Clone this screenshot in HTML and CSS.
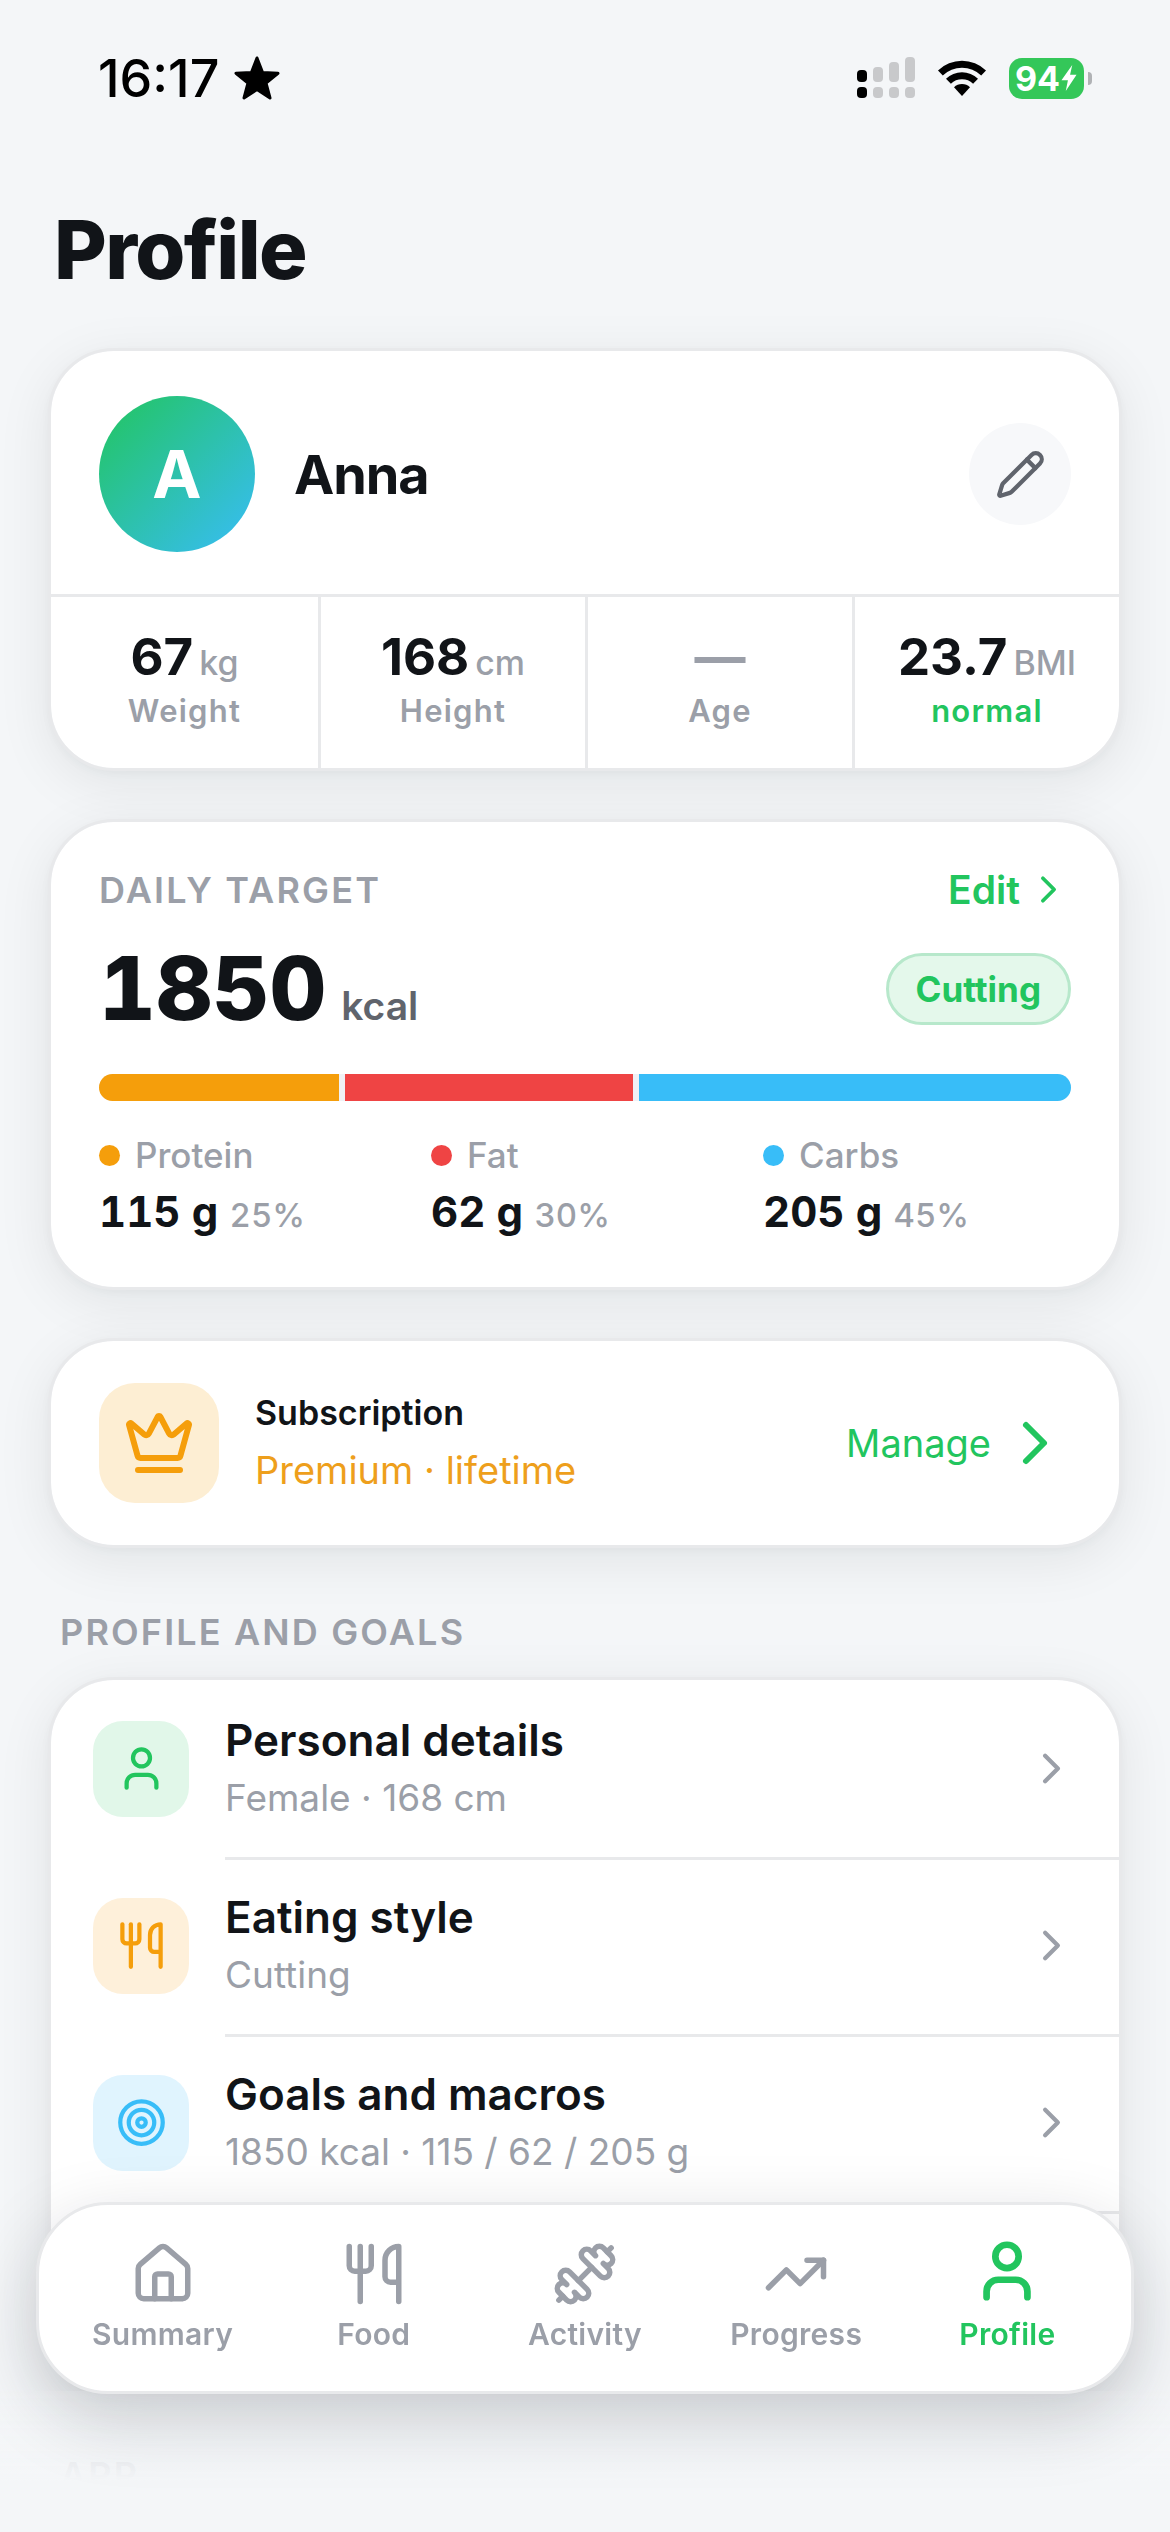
FILE: index.html
```html
<!DOCTYPE html>
<html lang="en">
<head>
  <meta charset="UTF-8">
  <meta name="viewport" content="width=device-width, initial-scale=1.0">
  <title>Profile</title>
  <link rel="stylesheet" href="styles.css">
</head>
<body>

<!-- shared icons -->
<svg class="sprite" aria-hidden="true">
  <symbol id="chevron" viewBox="0 0 24 24"><path d="m9 18 6-6-6-6"/></symbol>
  <symbol id="user" viewBox="0 0 24 24"><path d="M19 21v-2a4 4 0 0 0-4-4H9a4 4 0 0 0-4 4v2"/><circle cx="12" cy="7" r="4"/></symbol>
  <symbol id="utensils" viewBox="0 0 24 24"><path d="M3 2v7c0 1.1.9 2 2 2h4a2 2 0 0 0 2-2V2"/><path d="M7 2v20"/><path d="M21 15V2a5 5 0 0 0-5 5v6c0 1.1.9 2 2 2h3Zm0 0v7"/></symbol>
</svg>

<div class="status-bar">
  <div class="status-left">
    <span class="time">16:17</span>
    <svg class="star" viewBox="0 0 46 44"><path d="M23 2l5.600 14.500 15.400.8-12 9.700 4 15L23 33.500 10 42l4-15L2 17.300l15.400-.8z"/></svg>
  </div>
  <div class="status-right">
    <svg class="signal" viewBox="0 0 58 42">
      <g fill="#000"><rect x="0" y="13" width="10" height="12" rx="4"/><rect x="0" y="30" width="10" height="11" rx="4"/></g>
      <g fill="#c8c9cb"><rect x="16" y="10" width="10" height="15" rx="4"/><rect x="32" y="5" width="10" height="20" rx="4"/><rect x="48" y="0" width="10" height="25" rx="4"/><rect x="16" y="30" width="10" height="11" rx="4"/><rect x="32" y="30" width="10" height="11" rx="4"/><rect x="48" y="30" width="10" height="11" rx="4"/></g>
    </svg>
    <svg class="wifi" viewBox="0 0 50 38">
      <path d="M1 11.500a34.500 34.500 0 0 1 48 0l-4.800 5a27.700 27.700 0 0 0-38.400 0z"/>
      <path d="M9 19.800a23 23 0 0 1 32 0l-4.900 5a16 16 0 0 0-22.200 0z"/>
      <path d="M17 28.200a11.500 11.500 0 0 1 16 0L25 37z"/>
    </svg>
    <div class="battery">
      <span>94</span>
      <svg class="bolt" viewBox="0 0 16 26"><path d="M11 1 1 15h6l-2 10L15 10H9z"/></svg>
    </div>
  </div>
</div>

<main class="page">
  <h1>Profile</h1>

  <section class="card">
    <div class="user-head">
      <div class="avatar">A</div>
      <h2 class="user-name">Anna</h2>
      <button class="edit-btn" aria-label="Edit profile">
        <svg class="icon icon-sm" viewBox="0 0 24 24"><path d="M21.174 6.812a1 1 0 0 0-3.986-3.987L3.842 16.174a2 2 0 0 0-.5.83l-1.321 4.352a.5.5 0 0 0 .623.622l4.353-1.320a2 2 0 0 0 .83-.497z"/><path d="m15 5 4 4"/></svg>
      </button>
    </div>
    <div class="stats">
      <div class="stat">
        <div class="stat-value">67<small>kg</small></div>
        <div class="stat-label">Weight</div>
      </div>
      <div class="stat">
        <div class="stat-value">168<small>cm</small></div>
        <div class="stat-label">Height</div>
      </div>
      <div class="stat">
        <div class="stat-value empty">—</div>
        <div class="stat-label">Age</div>
      </div>
      <div class="stat">
        <div class="stat-value">23.7<small>BMI</small></div>
        <div class="stat-label good">normal</div>
      </div>
    </div>
  </section>

  <section class="card target">
    <div class="target-head">
      <h2 class="caption">DAILY TARGET</h2>
      <button class="link-btn">Edit <svg class="icon icon-xs" viewBox="0 0 24 24"><use href="#chevron"/></svg></button>
    </div>
    <div class="target-main">
      <div class="kcal">1850<small>kcal</small></div>
      <span class="pill">Cutting</span>
    </div>
    <div class="macro-bar">
      <span class="protein" style="flex-grow: 25"></span>
      <span class="fat" style="flex-grow: 30"></span>
      <span class="carbs" style="flex-grow: 45"></span>
    </div>
    <div class="macros">
      <div>
        <div class="macro-name"><i class="dot protein"></i>Protein</div>
        <div class="macro-value">115 g <small>25%</small></div>
      </div>
      <div>
        <div class="macro-name"><i class="dot fat"></i>Fat</div>
        <div class="macro-value">62 g <small>30%</small></div>
      </div>
      <div>
        <div class="macro-name"><i class="dot carbs"></i>Carbs</div>
        <div class="macro-value">205 g <small>45%</small></div>
      </div>
    </div>
  </section>

  <section class="card subscription">
    <div class="sub-icon">
      <svg class="icon icon-lg" viewBox="0 0 24 24"><path d="M11.562 3.266a.5.5 0 0 1 .876 0L15.390 8.870a1 1 0 0 0 1.516.294L21.183 5.500a.5.5 0 0 1 .798.519l-2.834 10.246a1 1 0 0 1-.956.734H5.810a1 1 0 0 1-.957-.734L2.020 6.020a.5.5 0 0 1 .798-.519l4.276 3.664a1 1 0 0 0 1.516-.294z"/><path d="M5 21h14"/></svg>
    </div>
    <div class="sub-text">
      <div class="sub-title">Subscription</div>
      <div class="sub-plan">Premium · lifetime</div>
    </div>
    <button class="manage-btn">Manage <svg class="icon icon-lg" viewBox="0 0 24 24"><use href="#chevron"/></svg></button>
  </section>

  <h2 class="caption section-title">PROFILE AND GOALS</h2>

  <section class="card list">
    <a class="row" href="#">
      <span class="row-icon green"><svg class="icon icon-sm" viewBox="0 0 24 24"><use href="#user"/></svg></span>
      <span class="row-main">
        <span class="row-text"><span class="row-title">Personal details</span><span class="row-sub">Female · 168 cm</span></span>
        <svg class="icon icon-sm" viewBox="0 0 24 24"><use href="#chevron"/></svg>
      </span>
    </a>
    <a class="row" href="#">
      <span class="row-icon orange"><svg class="icon icon-sm" viewBox="0 0 24 24"><use href="#utensils"/></svg></span>
      <span class="row-main">
        <span class="row-text"><span class="row-title">Eating style</span><span class="row-sub">Cutting</span></span>
        <svg class="icon icon-sm" viewBox="0 0 24 24"><use href="#chevron"/></svg>
      </span>
    </a>
    <a class="row" href="#">
      <span class="row-icon blue"><svg class="icon icon-sm" viewBox="0 0 24 24"><circle cx="12" cy="12" r="10"/><circle cx="12" cy="12" r="6"/><circle cx="12" cy="12" r="2"/></svg></span>
      <span class="row-main">
        <span class="row-text"><span class="row-title">Goals and macros</span><span class="row-sub">1850 kcal · 115 / 62 / 205 g</span></span>
        <svg class="icon icon-sm" viewBox="0 0 24 24"><use href="#chevron"/></svg>
      </span>
    </a>
    <div class="row">
      <span class="row-icon"></span>
      <span class="row-main"></span>
    </div>
  </section>

  <h2 class="caption section-title">APP</h2>
</main>

<div class="bottom-fade"></div>

<nav class="tab-bar">
  <a class="tab" href="#">
    <svg class="icon" viewBox="0 0 24 24"><path d="M15 21v-8a1 1 0 0 0-1-1h-4a1 1 0 0 0-1 1v8"/><path d="M3 10a2 2 0 0 1 .709-1.528l7-5.999a2 2 0 0 1 2.582 0l7 5.999A2 2 0 0 1 21 10v9a2 2 0 0 1-2 2H5a2 2 0 0 1-2-2z"/></svg>
    <span>Summary</span>
  </a>
  <a class="tab" href="#">
    <svg class="icon" viewBox="0 0 24 24"><use href="#utensils"/></svg>
    <span>Food</span>
  </a>
  <a class="tab" href="#">
    <svg class="icon" viewBox="0 0 24 24"><path d="M17.596 12.768a2 2 0 1 0 2.829-2.829l-1.768-1.767a2 2 0 0 0 2.828-2.829l-2.828-2.828a2 2 0 0 0-2.829 2.828l-1.767-1.768a2 2 0 1 0-2.829 2.829z"/><path d="m2.500 21.500 1.400-1.400"/><path d="m20.100 3.900 1.400-1.400"/><path d="M5.343 21.485a2 2 0 1 0 2.829-2.828l1.767 1.768a2 2 0 1 0 2.829-2.829l-6.364-6.364a2 2 0 1 0-2.829 2.829l1.768 1.767a2 2 0 0 0-2.828 2.829z"/><path d="m9.600 14.400 4.800-4.800"/></svg>
    <span>Activity</span>
  </a>
  <a class="tab" href="#">
    <svg class="icon" viewBox="0 0 24 24"><path d="M16 7h6v6"/><path d="m22 7-8.500 8.500-5-5L2 17"/></svg>
    <span>Progress</span>
  </a>
  <a class="tab active" href="#">
    <svg class="icon" viewBox="0 0 24 24"><use href="#user"/></svg>
    <span>Profile</span>
  </a>
</nav>

</body>
</html>
```
FILE: styles.css
```css
:root {
  --bg: #f4f6f8;
  --line: #e8e9eb;
  --ink: #111418;
  --gray: #9b9fa8;
  --green: #22c55e;
  --orange: #f59e0b;
  --red: #ef4444;
  --blue: #38bdf8;
}
* {
  box-sizing: border-box;
}
body {
  margin: 0;
  background: var(--bg);
  color: var(--ink);
  font-family: Inter, "Liberation Sans", sans-serif;
}
h1, h2 {
  margin: 0;
}
button {
  border: 0;
  padding: 0;
  background: none;
  font-family: inherit;
  cursor: pointer;
}
a {
  color: inherit;
  text-decoration: none;
}
.sprite {
  display: none;
}
.icon {
  flex: none;
  width: 66px;
  height: 66px;
  fill: none;
  stroke: currentColor;
  stroke-width: 2;
  stroke-linecap: round;
  stroke-linejoin: round;
}
.icon-xs {
  width: 45px;
  height: 45px;
}
.icon-sm {
  width: 51px;
  height: 51px;
}
.icon-lg {
  width: 72px;
  height: 72px;
}

/* status bar */
.status-bar {
  display: flex;
  justify-content: space-between;
  padding: 48px 78px 0 98px;
  color: #000;
}
.status-left,
.status-right {
  display: flex;
  align-items: center;
  height: 60px;
}
.status-left {
  gap: 15px;
}
.time {
  font-size: 52px;
  font-weight: 500;
}
.star {
  width: 46px;
  height: 44px;
  stroke: #000;
  stroke-width: 3;
  stroke-linejoin: round;
}
.status-right {
  gap: 22px;
}
.signal {
  width: 58px;
  height: 42px;
}
.wifi {
  width: 50px;
  height: 38px;
}
.battery {
  position: relative;
  display: flex;
  align-items: center;
  justify-content: center;
  width: 75px;
  height: 41px;
  margin-right: 8px;
  border-radius: 13px;
  background: #34c759;
  color: #fff;
  font-size: 34px;
  font-weight: 700;
}
.battery::after {
  content: "";
  position: absolute;
  right: -8px;
  top: 14px;
  width: 4px;
  height: 13px;
  border-radius: 0 4px 4px 0;
  background: #b0b2b5;
}
.bolt {
  width: 18px;
  height: 28px;
  fill: #fff;
}

/* page */
.page {
  padding: 94px 48px 0;
}
h1 {
  margin-bottom: 50px;
  padding-left: 6px;
  font-size: 81px;
  font-weight: 800;
  line-height: 96px;
  letter-spacing: -0.02em;
}
.card {
  margin-bottom: 48px;
  border: 3px solid var(--line);
  border-radius: 66px;
  background: #fff;
  background-clip: padding-box;
  box-shadow: 0 12px 54px rgba(17, 20, 24, 0.08), 0 3px 9px rgba(17, 20, 24, 0.03);
  overflow: hidden;
}
.caption {
  color: var(--gray);
  font-size: 36px;
  font-weight: 600;
  letter-spacing: 0.06em;
}

/* user card */
.user-head {
  display: flex;
  align-items: center;
  gap: 39px;
  padding: 45px 48px 42px;
}
.avatar {
  display: flex;
  align-items: center;
  justify-content: center;
  width: 156px;
  height: 156px;
  border-radius: 50%;
  background: linear-gradient(135deg, var(--green), var(--blue));
  color: #fff;
  font-size: 66px;
  font-weight: 700;
}
.user-name {
  flex: 1;
  font-size: 54px;
  font-weight: 700;
  letter-spacing: -0.02em;
}
.edit-btn {
  display: flex;
  align-items: center;
  justify-content: center;
  width: 102px;
  height: 102px;
  border-radius: 50%;
  background: #f7f8fa;
  color: #60646c;
}
.stats {
  display: grid;
  grid-template-columns: repeat(4, 1fr);
  border-top: 3px solid var(--line);
}
.stat {
  padding: 30px 0 39px;
  text-align: center;
}
.stat + .stat {
  border-left: 3px solid var(--line);
}
.stat-value {
  font-size: 51px;
  font-weight: 700;
  line-height: 60px;
}
.stat-value small {
  margin-left: 6px;
  color: var(--gray);
  font-size: 34px;
  font-weight: 500;
  line-height: 1;
}
.stat-value.empty {
  color: var(--gray);
}
.stat-label {
  margin-top: 6px;
  color: var(--gray);
  font-size: 31px;
  font-weight: 600;
  line-height: 36px;
  letter-spacing: 0.04em;
}
.stat-label.good {
  color: var(--green);
}

/* daily target */
.target {
  padding: 45px 48px 48px;
}
.target-head,
.target-main {
  display: flex;
  align-items: center;
  justify-content: space-between;
}
.target-head {
  height: 45px;
}
.link-btn {
  display: flex;
  align-items: center;
  gap: 6px;
  color: var(--green);
  font-size: 39px;
  font-weight: 600;
}
.target-main {
  margin-top: 24px;
}
.kcal {
  font-size: 88px;
  font-weight: 800;
  line-height: 105px;
  font-variant-numeric: tabular-nums;
}
.kcal small {
  margin-left: 15px;
  color: #60646c;
  font-size: 39px;
  font-weight: 600;
  line-height: 1;
}
.pill {
  padding: 0 27px;
  border: 3px solid #b7e8cb;
  border-radius: 36px;
  background: #e4f8eb;
  color: var(--green);
  font-size: 35px;
  font-weight: 700;
  line-height: 66px;
}
.protein {
  background: var(--orange);
}
.fat {
  background: var(--red);
}
.carbs {
  background: var(--blue);
}
.macro-bar {
  display: flex;
  gap: 6px;
  height: 27px;
  margin-top: 33px;
  border-radius: 14px;
  background: #f0f1f5;
  overflow: hidden;
}
.macro-bar span {
  flex-basis: 0;
}
.macros {
  display: grid;
  grid-template-columns: repeat(3, 1fr);
  gap: 24px;
  margin-top: 33px;
}
.macro-name {
  display: flex;
  align-items: center;
  gap: 15px;
  color: var(--gray);
  font-size: 35px;
  font-weight: 500;
  line-height: 42px;
}
.dot {
  width: 21px;
  height: 21px;
  border-radius: 50%;
}
.macro-value {
  margin-top: 9px;
  font-size: 42px;
  font-weight: 700;
  line-height: 54px;
  font-variant-numeric: tabular-nums;
}
.macro-value small {
  color: var(--gray);
  font-size: 33px;
  font-weight: 500;
  line-height: 1;
}

/* subscription */
.subscription {
  display: flex;
  align-items: center;
  gap: 36px;
  padding: 42px 48px;
}
.sub-icon {
  display: flex;
  align-items: center;
  justify-content: center;
  width: 120px;
  height: 120px;
  border-radius: 36px;
  background: #fdeed3;
  color: var(--orange);
}
.sub-text {
  flex: 1;
}
.sub-title {
  font-size: 34px;
  font-weight: 600;
  line-height: 54px;
}
.sub-plan {
  color: #ee9f1c;
  font-size: 38px;
  line-height: 60px;
}
.manage-btn {
  display: flex;
  align-items: center;
  gap: 8px;
  color: var(--green);
  font-size: 38px;
}

/* settings list */
.section-title {
  margin: 60px 0 21px;
  padding-left: 12px;
  line-height: 48px;
}
.list {
  margin-bottom: 0;
}
.row {
  display: flex;
  align-items: center;
  gap: 36px;
  height: 177px;
  padding-left: 42px;
}
.row-icon {
  display: flex;
  align-items: center;
  justify-content: center;
  width: 96px;
  height: 96px;
  border-radius: 30px;
}
.row-icon.green {
  background: #e1f7e9;
  color: var(--green);
}
.row-icon.orange {
  background: #fef0da;
  color: var(--orange);
}
.row-icon.blue {
  background: #e0f4fe;
  color: var(--blue);
}
.row-main {
  flex: 1;
  display: flex;
  align-items: center;
  justify-content: space-between;
  height: 100%;
  padding: 0 42px 3px 0;
  border-top: 3px solid var(--line);
  color: var(--gray);
}
.row:first-child .row-main {
  border-top-color: transparent;
}
.row-title,
.row-sub {
  display: block;
}
.row-title {
  color: var(--ink);
  font-size: 44px;
  font-weight: 600;
  line-height: 57px;
}
.row-sub {
  font-size: 37px;
  line-height: 57px;
}

/* bottom navigation */
.bottom-fade {
  position: fixed;
  left: 0;
  right: 0;
  bottom: 0;
  height: 141px;
  background: linear-gradient(rgba(244, 246, 248, 0.6), var(--bg) 90px);
}
.tab-bar {
  position: fixed;
  left: 36px;
  right: 36px;
  bottom: 138px;
  display: grid;
  grid-template-columns: repeat(5, 1fr);
  padding: 36px 18px 39px;
  border: 3px solid var(--line);
  border-radius: 72px;
  background: #fff;
  box-shadow: 0 24px 72px rgba(17, 24, 32, 0.18);
}
.tab {
  display: flex;
  flex-direction: column;
  align-items: center;
  gap: 9px;
  color: var(--gray);
  font-size: 30px;
  font-weight: 600;
  line-height: 36px;
  letter-spacing: 0.01em;
}
.tab.active {
  color: var(--green);
}
.tab.active .icon {
  width: 70px;
  height: 70px;
  margin: -5px 0 1px;
  stroke-width: 2.3;
}
```
